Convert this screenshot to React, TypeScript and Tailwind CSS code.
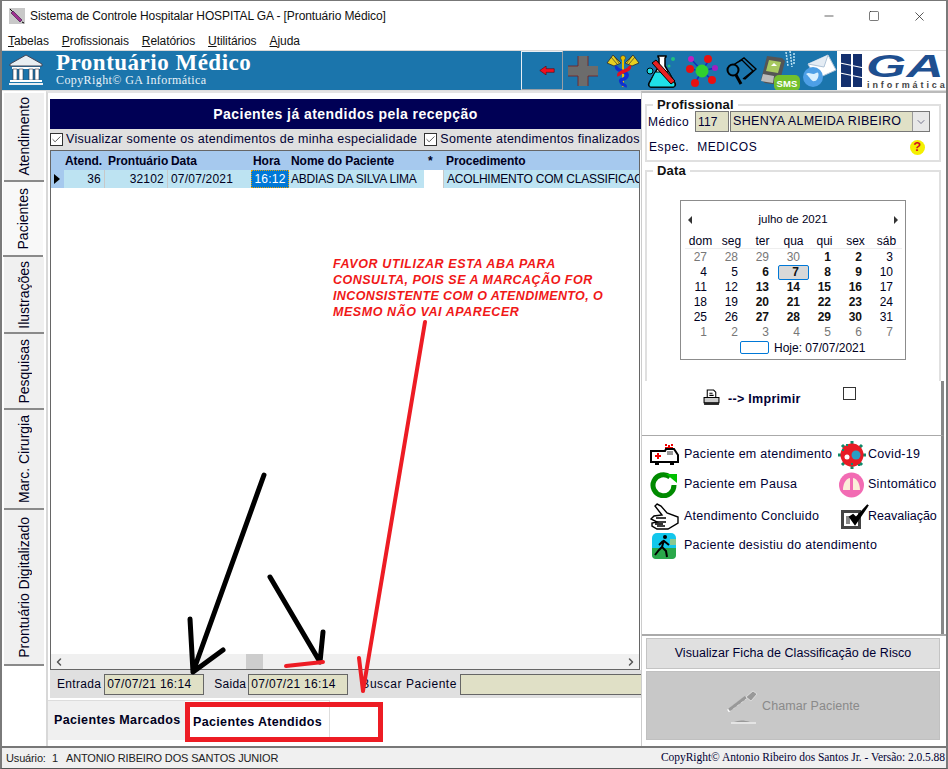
import { ChevronLeft, ChevronRight, Minus, Square, X, ChevronDown, Check } from 'lucide-react';

const sideTabs = [
  { label: 'Atendimento', h: 'h-[89px]', active: false },
  { label: 'Pacientes', h: 'h-[75px]', active: true },
  { label: 'Ilustrações', h: 'h-[77px]', active: false },
  { label: 'Pesquisas', h: 'h-[76px]', active: false },
  { label: 'Marc. Cirurgia', h: 'h-[100px]', active: false },
  { label: 'Prontuário Digitalizado', h: 'h-[156px]', active: false },
];

const menus = [
  ['T', 'abelas'],
  ['P', 'rofissionais'],
  ['R', 'elatórios'],
  ['U', 'tilitários'],
  ['A', 'juda'],
];

// dias do calendario: [dia, tipo] 0 = outro mes, 1 = normal, 2 = negrito, 3 = selecionado
const calDays: [number, number][] = [
  [27, 0], [28, 0], [29, 0], [30, 0], [1, 2], [2, 2], [3, 1],
  [4, 1], [5, 1], [6, 2], [7, 3], [8, 2], [9, 2], [10, 1],
  [11, 1], [12, 1], [13, 2], [14, 2], [15, 2], [16, 2], [17, 1],
  [18, 1], [19, 1], [20, 2], [21, 2], [22, 2], [23, 2], [24, 1],
  [25, 1], [26, 1], [27, 2], [28, 2], [29, 2], [30, 2], [31, 1],
  [1, 0], [2, 0], [3, 0], [4, 0], [5, 0], [6, 0], [7, 0],
];

function AmbulanceIcon() {
  return (
    <svg width="29" height="21" viewBox="0 0 29 21">
      <rect x="15" y="0" width="2" height="2" fill="#e00" /><rect x="18" y="1" width="2" height="2" fill="#e00" /><rect x="21" y="0" width="2" height="2" fill="#e00" />
      <rect x="15" y="3" width="8" height="2" fill="#e00" />
      <path d="M1 7h14l1-2h8l4 6v7H1z" fill="#fff" stroke="#000" strokeWidth="2" />
      <rect x="17" y="7" width="6" height="4" fill="#999" />
      <path d="M8 9v6M5 12h6" stroke="#e00" strokeWidth="2" />
      <rect x="5" y="18" width="4" height="3" fill="#000" /><rect x="20" y="18" width="4" height="3" fill="#000" />
    </svg>
  );
}

function PauseIcon() {
  return (
    <svg width="27" height="27" viewBox="0 0 27 27">
      <path d="M20 6a10.500 10.500 0 1 0 4 8" fill="none" stroke="#008a00" strokeWidth="5" />
      <path d="M16 3h11v9z" fill="#00c000" />
    </svg>
  );
}

function HandIcon() {
  return (
    <svg width="29" height="28" viewBox="0 0 29 28" fill="#fff" stroke="#000" strokeWidth="1.4">
      <path d="M7 1l4 2 6 7 11 4v6l-10 6H7l-5-3v-3l5-1-6-3 3-3 8-1-7-9z" />
      <path d="M6 15h10M6 19h10M7 23h8" fill="none" />
      <rect x="5" y="20" width="8" height="2" fill="#333" stroke="none" />
    </svg>
  );
}

function RunnerIcon() {
  return (
    <svg width="24" height="26" viewBox="0 0 24 26">
      <rect width="24" height="26" rx="5" fill="#13c7ec" />
      <path d="M0 15h24v7a4 4 0 0 1-4 4H4a4 4 0 0 1-4-4z" fill="#2aa84a" />
      <rect x="18" y="6" width="6" height="6" fill="#8bc88f" />
      <circle cx="13" cy="4" r="2" fill="#000" />
      <path d="M12 7l-2 7 4 4 1 6M10 14l-3 3-4 5M12 8l5 4M11 8l-4 4" stroke="#000" strokeWidth="2" fill="none" />
    </svg>
  );
}

function CovidIcon() {
  return (
    <svg width="28" height="28" viewBox="0 0 28 28">
      <g stroke="#0f8a6a" strokeWidth="3">
        <path d="M14 0v4M14 24v4M0 14h4M24 14h4M4 4l3 3M21 21l3 3M24 4l-3 3M4 24l3-3" />
      </g>
      <circle cx="14" cy="14" r="11.500" fill="#e81c24" />
      <circle cx="18" cy="14" r="4.500" fill="#2a9ec4" />
      <circle cx="9" cy="16" r="2.500" fill="#fff" />
      <path d="M4 9h2M8 4h2M20 24h2M13 23h2" stroke="#0f8a6a" strokeWidth="2" />
    </svg>
  );
}

function LungsIcon() {
  return (
    <svg width="27" height="26" viewBox="0 0 27 26">
      <circle cx="13.500" cy="13" r="12.500" fill="#f26bb3" />
      <path d="M12 6c-5 1-7 7-7 12h7zM15 6c5 1 7 7 7 12h-7z" fill="#fbeed8" />
      <path d="M13.500 3v8" stroke="#f26bb3" strokeWidth="2" />
    </svg>
  );
}

function ReavalIcon() {
  return (
    <svg width="28" height="25" viewBox="0 0 28 25">
      <rect x="1.500" y="7.500" width="17" height="16" fill="#fff" stroke="#444" strokeWidth="3" />
      <rect x="5" y="12" width="4" height="8" fill="#888" />
      <path d="M9 13l5 7L27 1 15 14l-3-3z" fill="#000" stroke="#000" strokeWidth="2" />
    </svg>
  );
}

function Toolbar() {
  return (
    <div className="flex items-center h-full">
      <div className="w-[42px] h-[39px] border border-t-[#e8eef4] border-l-[#e8eef4] border-r-[#9aa0a6] border-b-[#9aa0a6] flex items-center justify-center pl-[10px]">
        <svg width="16" height="9" viewBox="0 0 16 10"><path d="M0 5l7-5v3h9v4H7v3z" fill="#f01020" stroke="#500" strokeWidth="0.6" /></svg>
      </div>
      <svg className="ml-[4px]" width="32" height="32" viewBox="0 0 32 32"><path d="M11 1h10v10h10v10H21v10H11V21H1V11h10z" fill="#6c6c6c" /><path d="M1 11h10V1M21 1v10M1 21h10v10M21 31V21h10" stroke="#7a1c1c" strokeWidth="0.8" fill="none" /></svg>
      <svg className="ml-[7px]" width="34" height="34" viewBox="0 0 34 34">
        <path d="M15 9L7 1 1 9l7 3zM19 9l8-8 6 8-7 3z" fill="#e8d020" stroke="#333" strokeWidth="0.9" />
        <path d="M5 3l6 7M8 2l5 7M29 3l-6 7M26 2l-5 7" stroke="#333" strokeWidth="0.7" />
        <circle cx="17" cy="4" r="2.500" fill="#e8c000" stroke="#333" strokeWidth="0.6" />
        <rect x="16" y="5" width="2" height="28" fill="#e8c000" />
        <path d="M11 12c-3 5 12 5 10 10s-8 2-6 6 5 3 4 5" fill="none" stroke="#1030d0" strokeWidth="3.5" />
        <path d="M23 12c3 5-12 5-10 10" fill="none" stroke="#e01020" strokeWidth="3.5" />
      </svg>
      <svg className="ml-[6px]" width="32" height="34" viewBox="0 0 32 34">
        <path d="M12 2h8v1l-1 1v8l10 17c1 2 0 4-2 4H5c-2 0-3-2-2-4l10-17V4l-1-1z" fill="#fff" stroke="#000" strokeWidth="1.5" />
        <path d="M9 18h14l6 12c0 2-1 3-2 3H5c-1 0-2-1-2-3z" fill="#1fe0e8" stroke="#000" />
        <path d="M6 9l4-3 19 21-4 3z" fill="#e82020" stroke="#000" />
        <circle cx="4" cy="17" r="3" fill="#1fe0e8" stroke="#000" /><circle cx="27" cy="5" r="2" fill="#20c080" /><circle cx="23" cy="12" r="1.500" fill="#20c080" />
      </svg>
      <svg className="ml-[8px]" width="32" height="32" viewBox="0 0 32 32">
        <g stroke="#1030c0" strokeWidth="1.5"><path d="M4 14L16 16M23 5L16 16M29 13L16 16M9 28L16 16M26 25L16 16M5 4L16 16" /></g>
        <circle cx="16" cy="16" r="6.500" fill="#30d030" />
        <circle cx="5" cy="4" r="3" fill="#c020c0" /><circle cx="22" cy="4" r="4" fill="#e81010" /><circle cx="29" cy="13" r="3" fill="#a020c0" />
        <circle cx="4" cy="14" r="4" fill="#e81010" /><circle cx="9" cy="28" r="4" fill="#e81010" /><circle cx="26" cy="25" r="4" fill="#e81010" />
      </svg>
      <svg className="ml-[7px]" width="32" height="30" viewBox="0 0 32 30" fill="none" stroke="#000" strokeWidth="1.4">
        <path d="M10 8l9-6 12 11-11 10-2-3" fill="#1b75ac" /><path d="M8 9l9-5 11 11-10 8" fill="#1b75ac" />
        <circle cx="8" cy="14" r="5.500" strokeWidth="2" fill="#1b75ac" /><path d="M11 19l5 9" strokeWidth="3" />
      </svg>
      <svg className="ml-[3px]" width="40" height="40" viewBox="0 0 40 40">
        <path d="M26 1l2 14M30 0l2 16M34 2l0 12" stroke="#bfe4f4" strokeWidth="1.5" strokeDasharray="2 1" fill="none" />
        <path d="M7 5l15 2 3 3-6 24-14-2-4-3z" fill="#555" />
        <path d="M9 9l12 2-3 11-12-2z" fill="#a7c860" /><path d="M11 15l3-3 3 3z" fill="#fff" />
        <path d="M3 23l11 2-1 7-12-2z" fill="#bbb" />
        <rect x="14" y="24" width="26" height="16" rx="5" fill="#72c02c" />
        <text x="27" y="36" textAnchor="middle" fontSize="9.500" fill="#fff" fontWeight="bold" fontFamily="Liberation Sans">SMS</text>
      </svg>
      <svg className="ml-[3px]" width="34" height="34" viewBox="0 0 34 34">
        <path d="M5 10L25 1l8 15-20 9z" fill="#fff" stroke="#b0c4d8" /><path d="M5 10l16 3 4-12" fill="#e4ecf4" stroke="#b0c4d8" />
        <circle cx="10" cy="23" r="10" fill="#4d9fe6" /><path d="M3 20c4-3 6 2 10-1s3 7-1 8-4-3-9-7z" fill="#d8f0ff" />
      </svg>
    </div>
  );
}

function GaLogo() {
  return (
    <svg width="110" height="38" viewBox="0 0 110 38">
      <rect x="4" y="3" width="10" height="33" fill="#14306e" /><rect x="16" y="3" width="9" height="33" fill="#14306e" />
      <path d="M3 12l24 5M3 22l24 5" stroke="#fff" strokeWidth="1.2" />
      <text x="29" y="26" fontSize="31" fontWeight="bold" fontStyle="italic" fill="#1e4f90" fontFamily="Liberation Sans" textLength="78" lengthAdjust="spacingAndGlyphs">GA</text>
      <text x="30" y="37" fontSize="9" fill="#444" fontWeight="bold" fontFamily="Liberation Sans" textLength="78">informática</text>
    </svg>
  );
}

export default function App() {
  return (
    <div className="relative w-[948px] h-[769px] overflow-hidden bg-white flex flex-col text-[12px] text-[#000033] border-x-2 border-x-[#7a7a7a] border-b border-b-[#555] font-['Liberation_Sans',sans-serif] tracking-[0.2px]">
      {/* barra de titulo */}
      <div className="h-[31px] shrink-0 flex items-center bg-white border-t border-t-[#777]">
        <div className="ml-[7px] w-[16px] h-[16px] bg-[#c8c8c8] flex items-center justify-center">
          <svg width="16" height="16" viewBox="0 0 16 16"><path d="M1 1l3 3M4 4l8 9M13 14l2 1" stroke="#000" strokeWidth="1" /><path d="M4 3l9 9-2 2-9-9z" fill="#a03090" stroke="#301040" strokeWidth="0.6" /></svg>
        </div>
        <span className="ml-[5px] text-[12px] text-[#111] tracking-[-0.1px]">Sistema de Controle Hospitalar HOSPITAL GA - [Prontuário Médico]</span>
        <div className="ml-auto flex items-center text-[#222]">
          <Minus size={14} strokeWidth={1.2} className="mr-[32px]" />
          <Square size={12} strokeWidth={1.2} className="mr-[32px]" />
          <X size={15} strokeWidth={1.2} className="mr-[19px]" />
        </div>
      </div>

      {/* menu */}
      <div className="h-[20px] shrink-0 flex items-center pl-[6px] gap-[13px] text-[#111] tracking-[-0.08px]">
        {menus.map(([first, rest]) => (
          <span key={first + rest}><span className="underline">{first}</span>{rest}</span>
        ))}
      </div>

      {/* cabecalho azul */}
      <div className="h-[40px] shrink-0 flex bg-[#1b75ac] mt-[-1px] border-t border-t-[#d8d8d8]">
        <svg className="ml-[7px] mt-[3px] shrink-0" width="34" height="32" viewBox="0 0 34 32">
          <path d="M17 1L1 10v2h32v-2z" fill="#e8eef2" stroke="#445" />
          <rect x="3" y="13" width="28" height="2" fill="#fff" />
          <g fill="#fff" stroke="#334" strokeWidth="0.6"><rect x="4" y="15" width="4" height="11" /><rect x="10" y="15" width="4" height="11" /><rect x="20" y="15" width="4" height="11" /><rect x="26" y="15" width="4" height="11" /></g>
          <rect x="1" y="26" width="32" height="2" fill="#fff" /><rect x="0" y="29" width="34" height="2" fill="#e8eef2" />
        </svg>
        <div className="ml-[13px] w-[198px] shrink-0 flex flex-col font-['Liberation_Serif',serif] text-white leading-none whitespace-nowrap">
          <span className="text-[23px] font-bold tracking-[0.5px]">Prontuário Médico</span>
          <span className="text-[12px] tracking-[0.4px] text-[#e8f2f8]">CopyRight© GA Informática</span>
        </div>
        <div className="ml-[267px] shrink-0"><Toolbar /></div>
        <div className="ml-auto w-[110px] h-full bg-white shrink-0"><GaLogo /></div>
      </div>

      {/* corpo */}
      <div className="flex-1 min-h-0 flex border-t border-t-[#ddd] bg-white">
        {/* abas laterais */}
        <div className="w-[44px] shrink-0 pt-[2px] pl-[2px] flex flex-col">
          {sideTabs.map(t => (
            <div
              key={t.label}
              className={`${t.h} w-[40px] flex items-center justify-center border-b-2 border-b-[#8a8a8a] ${t.active ? 'bg-[#f8f8f8] ml-[-1px]' : 'bg-[#f0f0f0]'}`}
            >
              <span className="[writing-mode:vertical-rl] rotate-180 text-[14px] text-[#000020] whitespace-nowrap tracking-[0px]">{t.label}</span>
            </div>
          ))}
        </div>

        {/* painel central */}
        <div className="w-[595px] shrink-0 flex flex-col border-l-2 border-l-[#d8d8d8] border-t-2 border-t-[#e4e4e4] pl-[2px] pt-[6px]">
          <div className="h-[30px] shrink-0 bg-[#000055] text-white font-bold text-[14px] flex items-center justify-center tracking-[0.45px]">
            Pacientes já atendidos pela recepção
          </div>
          <div className="h-[21px] shrink-0 bg-[#e0e0e0] flex items-center whitespace-nowrap overflow-hidden">
            <span className="w-[13px] h-[13px] border border-[#333] bg-white flex items-center justify-center shrink-0"><Check size={11} strokeWidth={1.6} className="text-[#222]" /></span>
            <span className="ml-[3px] tracking-[0.28px] text-[12.5px]">Visualizar somente os atendimentos de minha especialidade</span>
            <span className="ml-[7px] w-[13px] h-[13px] border border-[#333] bg-white flex items-center justify-center shrink-0"><Check size={11} strokeWidth={1.6} className="text-[#222]" /></span>
            <span className="ml-[3px] tracking-[0.26px] text-[12.5px]">Somente atendimentos finalizados</span>
          </div>

          {/* grade */}
          <div className="flex-1 min-h-0 flex flex-col border border-[#666] mr-[1px] overflow-hidden">
            <div className="h-[19px] shrink-0 bg-[#a6c9ee] flex items-center font-bold whitespace-nowrap text-[#000020] tracking-[-0.05px]">
              <span className="w-[13px]" />
              <span className="w-[41px] pl-[1px]">Atend.</span>
              <span className="w-[63px] pl-[3px]">Prontuário</span>
              <span className="w-[83px] pl-[3px]">Data</span>
              <span className="w-[38px] pl-[2px]">Hora</span>
              <span className="w-[135px] pl-[2px]">Nome do Paciente</span>
              <span className="w-[19px] pl-[4px]">*</span>
              <span className="pl-[3px]">Procedimento</span>
            </div>
            <div className="h-[18px] shrink-0 flex items-stretch whitespace-nowrap text-[#000020]">
              <span className="w-[13px] bg-[#a6c9ee] flex items-center pl-[3px]">
                <svg width="6" height="10" viewBox="0 0 6 10"><path d="M0 0l6 5-6 5z" fill="#000" /></svg>
              </span>
              <span className="w-[41px] bg-[#bde3f2] text-right pr-[3px] border-r border-r-[#c8c8c8]">36</span>
              <span className="w-[63px] bg-[#bde3f2] text-right pr-[3px] border-r border-r-[#c8c8c8]">32102</span>
              <span className="w-[83px] bg-[#bde3f2] pl-[3px]">07/07/2021</span>
              <span className="w-[38px] bg-[#0078d7] text-white text-center outline-1 outline-dotted outline-offset-[-1px] outline-[#e8a000]">16:12</span>
              <span className="w-[135px] bg-[#bde3f2] pl-[2px] overflow-hidden tracking-[-0.2px]">ABDIAS DA SILVA LIMA</span>
              <span className="w-[19px] bg-white" />
              <span className="flex-1 bg-[#bde3f2] pl-[3px] overflow-hidden border-l border-l-[#c8c8c8] tracking-[-0.2px]">ACOLHIMENTO COM CLASSIFICACAO</span>
            </div>
            <div className="flex-1 min-h-0 bg-white" />
            <div className="h-[15px] shrink-0 bg-[#f0f0f0] flex items-center text-[#555]">
              <ChevronLeft size={12} strokeWidth={3} className="ml-[2px]" />
              <span className="ml-[181px] w-[17px] h-[15px] bg-[#cdcdcd]" />
              <ChevronRight size={12} strokeWidth={3} className="ml-auto mr-[2px]" />
            </div>
          </div>

          {/* entrada e saida */}
          <div className="h-[28px] shrink-0 bg-[#e0e0e0] flex items-center whitespace-nowrap text-[#000020] overflow-hidden tracking-[0.3px]">
            <span className="ml-[7px]">Entrada</span>
            <span className="ml-[3px] w-[100px] h-[21px] bg-[#e0e0c6] border border-[#666] pl-[2px] flex items-center shrink-0">07/07/21 16:14</span>
            <span className="ml-[10px]">Saida</span>
            <span className="ml-[2px] w-[100px] h-[21px] bg-[#e0e0c6] border border-[#666] pl-[2px] flex items-center shrink-0">07/07/21 16:14</span>
            <span className="ml-[13px] tracking-[0.55px]">Buscar Paciente</span>
            <span className="ml-[3px] flex-1 h-[21px] bg-[#e0e0c6] border border-[#666] border-r-0" />
          </div>

          {/* abas de baixo */}
          <div className="h-[46px] shrink-0 flex mt-[2px] font-bold text-[#000020] whitespace-nowrap text-[12.5px] tracking-[0.35px]">
            <div className="w-[137px] h-[40px] bg-[#f0f0f0] border-t border-t-[#ddd] flex items-start pl-[6px] pt-[10px] ml-[-2px]">Pacientes Marcados</div>
            <div className="w-[145px] h-[40px] bg-white border-r border-r-[#ddd] border-t border-t-[#ddd] pl-[8px] pt-[12px]">Pacientes Atendidos</div>
          </div>
        </div>

        {/* painel direito */}
        <div className="flex-1 min-w-0 flex flex-col border-l border-l-[#ccc] border-t-2 border-t-[#bbb] text-[#000033]">
          <fieldset className="ml-[3px] mr-[5px] mt-[5px] h-[64px] shrink-0 border-2 border-[#e0e0e0]">
            <legend className="ml-[6px] px-[4px] font-bold text-[13px] leading-[14px] text-[#111]">Profissional</legend>
            <div className="flex items-center h-[23px] mt-[-2px] tracking-[0.1px]">
              <span className="ml-[1px] tracking-[0.4px]">Médico</span>
              <span className="ml-[6px] w-[34px] h-[21px] bg-[#e0e0c6] border border-[#777] flex items-center pl-[2px]">117</span>
              <span className="ml-[1px] w-[200px] h-[21px] bg-[#e0e0c6] border border-[#777] flex items-center pl-[2px] text-[12.5px] tracking-[0.3px]">
                SHENYA ALMEIDA RIBEIRO
                <span className="ml-auto w-[17px] h-full bg-[#e8e8e8] border-l border-l-[#999] flex items-center justify-center"><ChevronDown size={12} strokeWidth={1} /></span>
              </span>
            </div>
            <div className="flex items-center h-[22px] mt-[3px] pl-[2px] tracking-[0.6px]">
              Espec.&nbsp; MEDICOS
              <span className="ml-auto mr-[14px] w-[15px] h-[15px] rounded-full bg-[#f4f000] flex items-center justify-center text-[#d01020] font-bold text-[13px]">?</span>
            </div>
          </fieldset>

          <fieldset className="ml-[3px] mr-[5px] mt-[2px] h-[217px] shrink-0 border-2 border-b-0 border-[#e0e0e0]">
            <legend className="ml-[6px] px-[4px] font-bold text-[13px] leading-[14px] text-[#111]">Data</legend>
            <div className="ml-[33px] mt-[22px] w-[226px] h-[160px] border border-[#8c8c8c] bg-white flex flex-col text-[#000020] tracking-[0px]">
              <div className="h-[33px] shrink-0 flex items-center justify-between px-[7px] pt-[4px] text-[11.5px]">
                <svg width="4" height="8" viewBox="0 0 4 8"><path d="M4 0L0 4l4 4z" fill="#333" /></svg>
                <span>julho de 2021</span>
                <svg width="4" height="8" viewBox="0 0 4 8"><path d="M0 0l4 4-4 4z" fill="#333" /></svg>
              </div>
              <div className="ml-[4px] w-[217px] grid grid-cols-7 h-[15px] items-start border-b border-b-[#eee] text-center leading-[14px]">
                {['dom', 'seg', 'ter', 'qua', 'qui', 'sex', 'sáb'].map(d => <span key={d}>{d}</span>)}
              </div>
              <div className="ml-[4px] w-[217px] grid grid-cols-7 auto-rows-[15px] leading-[15px] mt-[1px]">
                {calDays.map(([day, kind], i) => (
                  <span
                    key={i}
                    className={`text-right pr-[9px] ${kind === 0 ? 'text-[#777]' : ''} ${kind >= 2 ? 'font-bold text-[#111]' : ''} ${kind === 3 ? 'bg-[#d8d8d8] border border-[#0078d7] rounded-[2px] leading-[13px]' : ''}`}
                  >
                    {day}
                  </span>
                ))}
              </div>
              <div className="flex items-center h-[15px] ml-[59px]">
                <span className="w-[29px] h-[13px] border border-[#0078d7] rounded-[2px]" />
                <span className="ml-[5px]">Hoje: 07/07/2021</span>
              </div>
            </div>
          </fieldset>

          <div className="h-[54px] shrink-0 flex items-start border-r-[3px] border-r-[#888] mr-[2px] pl-[61px] pt-[5px]">
            <svg className="mt-[3px]" width="17" height="17" viewBox="0 0 16 16"><path d="M4 1h6l2 2v5H4z" fill="#fff" stroke="#000" /><path d="M1 8h14v5H1z" fill="#ccc" stroke="#000" /><rect x="1" y="13" width="14" height="2" fill="#222" /><path d="M6 4h3M6 6h4" stroke="#000" /></svg>
            <span className="ml-[8px] font-bold mt-[4px] text-[12.5px] tracking-[0.3px]">--&gt; Imprimir</span>
            <span className="ml-[42px] w-[13px] h-[13px] border border-[#333] mt-[1px]" />
          </div>

          {/* legenda */}
          <div className="h-[199px] shrink-0 border-t border-t-[#aaa] border-r-[3px] border-r-[#888] mr-[2px] text-[#000033] pl-[8px] pt-[5px] whitespace-nowrap tracking-[0.28px] text-[12.5px]">
            <div className="h-[27px] flex items-center">
              <span className="w-[34px] shrink-0"><AmbulanceIcon /></span>
              <span className="w-[154px] shrink-0">Paciente em atendimento</span>
              <span className="w-[30px] shrink-0"><CovidIcon /></span>
              <span>Covid-19</span>
            </div>
            <div className="h-[33px] flex items-center">
              <span className="w-[34px] shrink-0"><PauseIcon /></span>
              <span className="w-[154px] shrink-0">Paciente em Pausa</span>
              <span className="w-[30px] shrink-0"><LungsIcon /></span>
              <span>Sintomático</span>
            </div>
            <div className="h-[31px] flex items-center">
              <span className="w-[34px] shrink-0"><HandIcon /></span>
              <span className="w-[154px] shrink-0">Atendimento Concluido</span>
              <span className="w-[30px] shrink-0 pl-[3px]"><ReavalIcon /></span>
              <span className="tracking-[0px]">Reavaliação</span>
            </div>
            <div className="h-[27px] flex items-center">
              <span className="w-[34px] shrink-0 pl-[2px]"><RunnerIcon /></span>
              <span>Paciente desistiu do atendimento</span>
            </div>
          </div>

          {/* botoes */}
          <div className="flex-1 border-t-2 border-t-[#aaa] pl-[4px] pr-[6px] pt-[2px] flex flex-col gap-[2px]">
            <button className="h-[31px] shrink-0 bg-[#e0e0e0] border border-[#c4c4c4] text-[#000033] tracking-[0.05px] text-[12.5px]">Visualizar Ficha de Classificação de Risco</button>
            <button className="h-[69px] shrink-0 bg-[#c8c8c8] border border-[#c0c0c0] flex items-center justify-center text-[#8a8a8a] tracking-[0.08px] text-[12.5px]">
              <svg className="mr-[4px]" width="32" height="36" viewBox="0 0 32 36">
                <path d="M2 23L22 8" stroke="#fff" strokeWidth="3" strokeDasharray="3 2" />
                <path d="M3 22L20 9" stroke="#999" strokeWidth="3" />
                <path d="M20 9l7-6 4 3-6 7z" fill="#999" stroke="#eee" strokeWidth="0.7" />
                <path d="M5 35h25" stroke="#eee" strokeWidth="1.5" /><path d="M8 34c5-2 10-2 16 0z" fill="#999" />
              </svg>
              <span className="mt-[2px]">Chamar Paciente</span>
            </button>
          </div>
        </div>
      </div>

      {/* barra de status */}
      <div className="h-[22px] shrink-0 bg-[#f0f0f0] border-t-2 border-t-[#777] flex items-center whitespace-nowrap text-[#222] pl-[4px] text-[11px] tracking-[-0.15px]">
        <span className="w-[46px]">Usuário:</span>
        <span className="w-[14px]">1</span>
        <span>ANTONIO RIBEIRO DOS SANTOS JUNIOR</span>
        <span className="ml-auto mr-[1px] font-['Liberation_Serif',serif] text-[11.5px] text-[#000033] tracking-[-0.04px]">CopyRight© Antonio Ribeiro dos Santos Jr. - Versão: 2.0.5.88</span>
      </div>

      {/* anotacoes desenhadas por cima da tela */}
      <div className="absolute left-[331px] top-[256px] w-[285px] text-[12.5px] leading-[16px] italic font-bold text-[#f01818] whitespace-nowrap">
        <div className="tracking-[0.62px]">FAVOR UTILIZAR ESTA ABA PARA</div>
        <div className="tracking-[0.5px]">CONSULTA, POIS SE A MARCAÇÃO FOR</div>
        <div className="tracking-[0.37px]">INCONSISTENTE COM O ATENDIMENTO, O</div>
        <div className="tracking-[0.56px]">MESMO NÃO VAI APARECER</div>
      </div>
      <svg className="absolute left-[-2px] top-0 pointer-events-none" width="948" height="769" viewBox="0 0 948 769" fill="none" strokeLinecap="round" strokeLinejoin="round">
        <g stroke="#000" strokeWidth="5">
          <path d="M264 475L193 672M190 619L193 672L223 650" />
          <path d="M270 577L320 662M323 632L320 662" />
        </g>
        <g stroke="#ed1c24">
          <path d="M286 666L323 662" strokeWidth="4" />
          <path d="M425 322L363 691M359 658L363 691" strokeWidth="4" />
          <rect x="187.500" y="704.500" width="193" height="35" strokeWidth="5" strokeLinejoin="miter" />
        </g>
      </svg>
    </div>
  );
}
